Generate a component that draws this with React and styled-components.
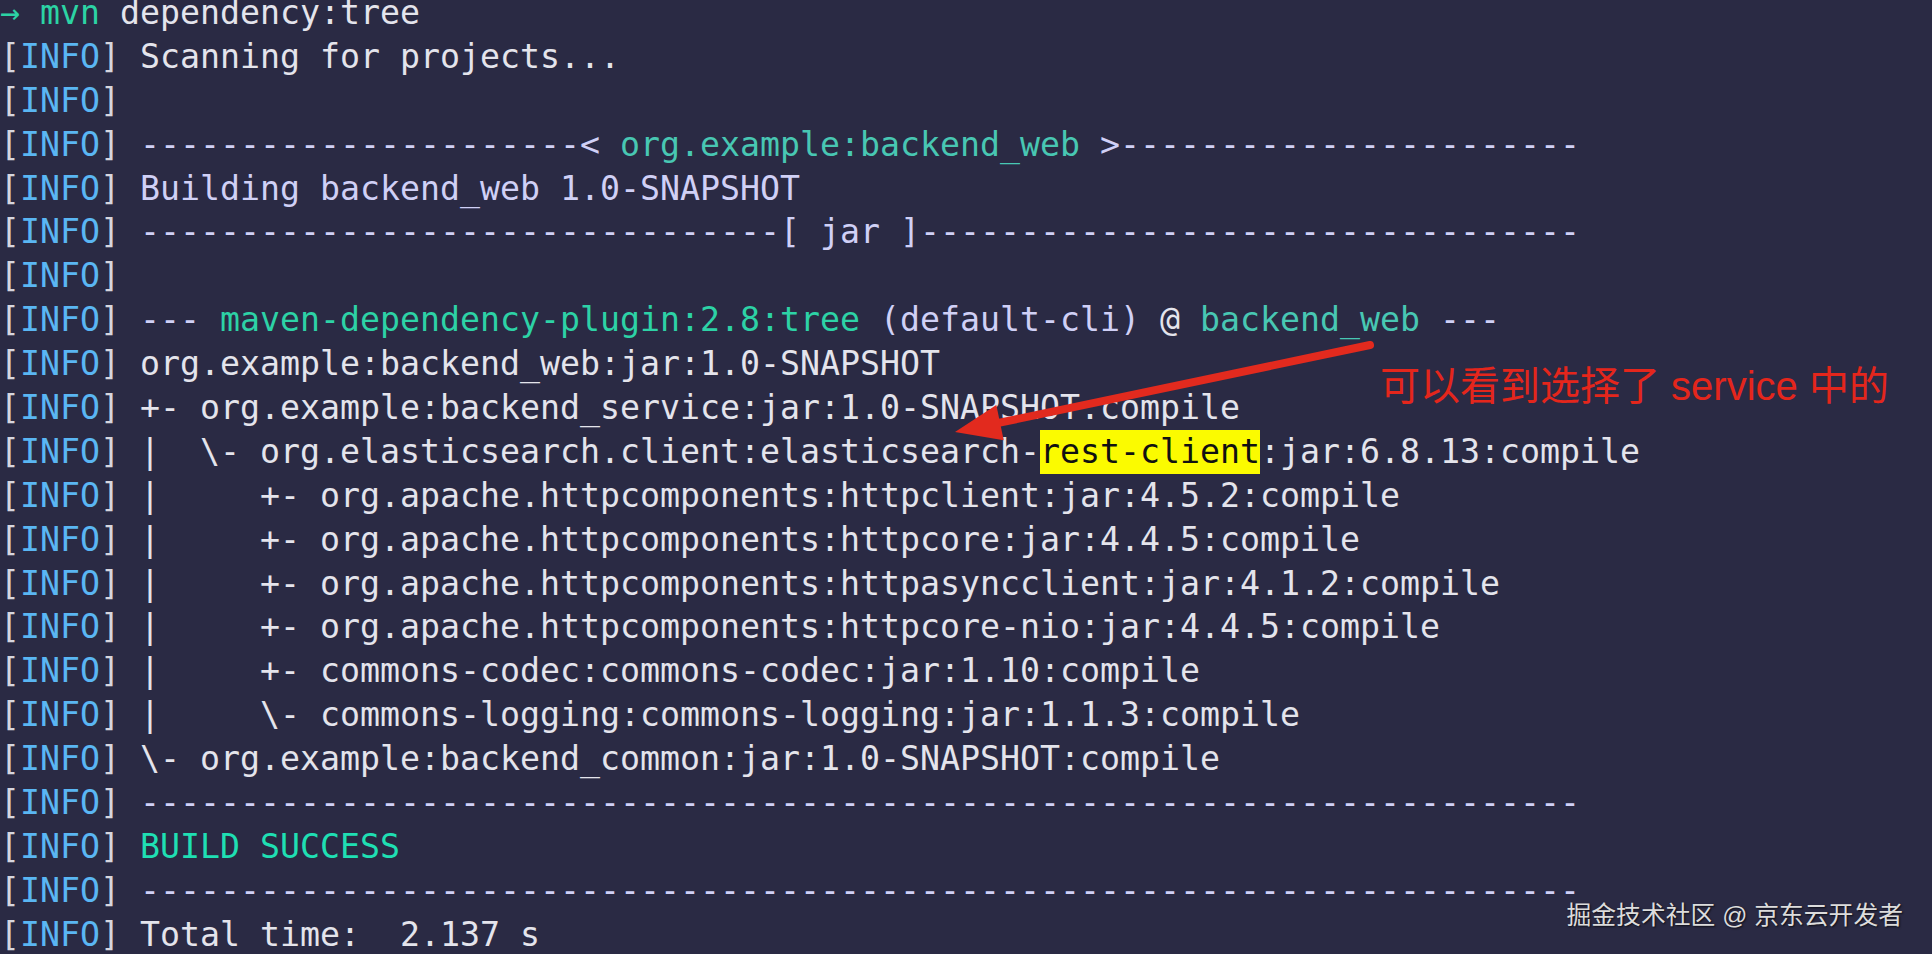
import React from "react";
import styled, { createGlobalStyle } from "styled-components";

const Global = createGlobalStyle`
  html, body {
    margin: 0;
    padding: 0;
    background: #2a2a44;
  }
  body {
    width: 1932px;
    height: 954px;
    overflow: hidden;
  }
`;

const Screen = styled.div`
  position: relative;
  width: 1932px;
  height: 954px;
  overflow: hidden;
  background: #2a2a44;
`;

const Terminal = styled.div`
  margin: -9px 0 0 0;
  padding: 0;
  font-family: "DejaVu Sans Mono", "Liberation Mono", monospace;
  font-size: 33.22px;
  line-height: 43.9px;
  color: #e6e6ee;
  white-space: pre;
`;

const Line = styled.div`
  height: 43.9px;
`;

const tones = {
  plain: "#e4e4ec",
  bracket: "#d6d6de",
  info: "#5ab6f3",
  strong: "#d0d0f6",
  cyan: "#48c7b3",
  mojo: "#2dd2a6",
  success: "#1fdfb3",
  prompt: "#2cd3a4",
};

const Tok = styled.span`
  color: ${(p) => tones[p.$tone] || tones.plain};
`;

const Mark = styled.span`
  display: inline-block;
  background: #fbfb00;
  color: #111111;
  line-height: 43.9px;
`;

const Overlay = styled.svg`
  position: absolute;
  left: 0;
  top: 0;
  pointer-events: none;
`;

const Note = styled.div`
  position: absolute;
  left: 1380px;
  top: 366px;
  font-family: "Liberation Sans", "Noto Sans CJK SC", sans-serif;
  font-size: 40px;
  line-height: 1;
  color: #e4261c;
  white-space: nowrap;
`;

const Watermark = styled.div`
  position: absolute;
  right: 29px;
  top: 904px;
  font-family: "Liberation Sans", "Noto Sans CJK SC", sans-serif;
  font-size: 24.8px;
  line-height: 1;
  color: #dcdcdc;
  text-shadow: 1px 1px 2px rgba(0, 0, 0, 0.7);
  white-space: nowrap;
`;

const INFO = [
  ["bracket", "["],
  ["info", "INFO"],
  ["bracket", "]"],
];

const d = (n) => "-".repeat(n);

const lines = [
  [
    ["prompt", "→ "],
    ["prompt", "mvn"],
    ["plain", " dependency:tree"],
  ],
  [...INFO, ["plain", " Scanning for projects..."]],
  [...INFO],
  [
    ...INFO,
    ["plain", " "],
    ["strong", d(22) + "< "],
    ["cyan", "org.example:backend_web"],
    ["strong", " >" + d(23)],
  ],
  [...INFO, ["plain", " "], ["strong", "Building backend_web 1.0-SNAPSHOT"]],
  [...INFO, ["plain", " "], ["strong", d(32) + "[ jar ]" + d(33)]],
  [...INFO],
  [
    ...INFO,
    ["plain", " "],
    ["strong", "--- "],
    ["mojo", "maven-dependency-plugin:2.8:tree"],
    ["plain", " "],
    ["strong", "(default-cli)"],
    ["plain", " @ "],
    ["cyan", "backend_web"],
    ["strong", " ---"],
  ],
  [...INFO, ["plain", " org.example:backend_web:jar:1.0-SNAPSHOT"]],
  [...INFO, ["plain", " +- org.example:backend_service:jar:1.0-SNAPSHOT:compile"]],
  [
    ...INFO,
    ["plain", " |  \\- org.elasticsearch.client:elasticsearch-"],
    ["mark", "rest-client"],
    ["plain", ":jar:6.8.13:compile"],
  ],
  [...INFO, ["plain", " |     +- org.apache.httpcomponents:httpclient:jar:4.5.2:compile"]],
  [...INFO, ["plain", " |     +- org.apache.httpcomponents:httpcore:jar:4.4.5:compile"]],
  [...INFO, ["plain", " |     +- org.apache.httpcomponents:httpasyncclient:jar:4.1.2:compile"]],
  [...INFO, ["plain", " |     +- org.apache.httpcomponents:httpcore-nio:jar:4.4.5:compile"]],
  [...INFO, ["plain", " |     +- commons-codec:commons-codec:jar:1.10:compile"]],
  [...INFO, ["plain", " |     \\- commons-logging:commons-logging:jar:1.1.3:compile"]],
  [...INFO, ["plain", " \\- org.example:backend_common:jar:1.0-SNAPSHOT:compile"]],
  [...INFO, ["plain", " "], ["strong", d(72)]],
  [...INFO, ["plain", " "], ["success", "BUILD SUCCESS"]],
  [...INFO, ["plain", " "], ["strong", d(72)]],
  [...INFO, ["plain", " Total time:  2.137 s"]],
];

function Arrow() {
  const tail = [1370, 345];
  const tip = [955, 432];
  const dx = tip[0] - tail[0];
  const dy = tip[1] - tail[1];
  const len = Math.hypot(dx, dy);
  const ux = dx / len;
  const uy = dy / len;
  const nx = -uy;
  const ny = ux;
  const headLen = 46;
  const half = 18;
  const bx = tip[0] - ux * headLen;
  const by = tip[1] - uy * headLen;
  const sx = tip[0] - ux * (headLen - 4);
  const sy = tip[1] - uy * (headLen - 4);
  const w1 = [bx + nx * half, by + ny * half];
  const w2 = [bx - nx * half, by - ny * half];
  return (
    <Overlay width="1932" height="954" viewBox="0 0 1932 954">
      <line
        x1={tail[0]}
        y1={tail[1]}
        x2={sx}
        y2={sy}
        stroke="#e22a1e"
        strokeWidth="8"
        strokeLinecap="round"
      />
      <polygon
        points={`${tip[0]},${tip[1]} ${w1[0]},${w1[1]} ${w2[0]},${w2[1]}`}
        fill="#e22a1e"
      />
    </Overlay>
  );
}

export default function App() {
  return (
    <Screen>
      <Global />
      <Terminal>
        {lines.map((segs, i) => (
          <Line key={i}>
            {segs.map(([tone, text], j) =>
              tone === "mark" ? (
                <Mark key={j}>{text}</Mark>
              ) : (
                <Tok key={j} $tone={tone}>
                  {text}
                </Tok>
              )
            )}
          </Line>
        ))}
      </Terminal>
      <Arrow />
      <Note>可以看到选择了 service 中的</Note>
      <Watermark>掘金技术社区 @ 京东云开发者</Watermark>
    </Screen>
  );
}
